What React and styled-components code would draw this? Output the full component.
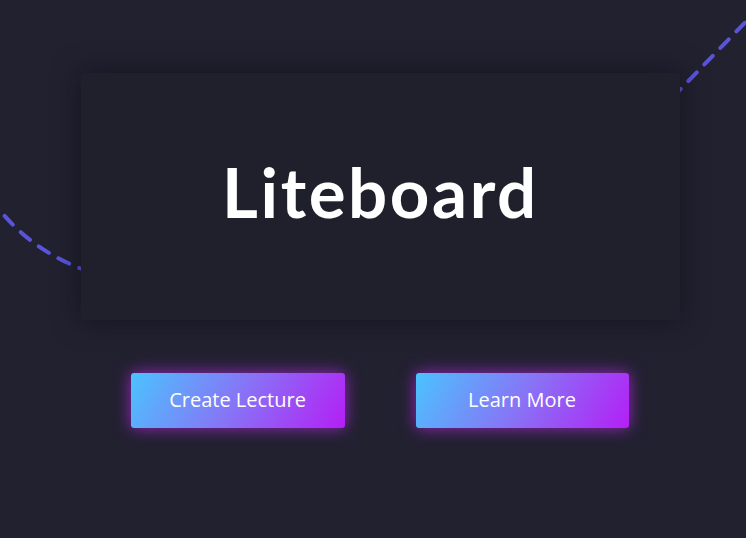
import React from 'react'
import styled, { createGlobalStyle } from 'styled-components'

const GlobalStyle = createGlobalStyle`
  html, body {
    margin: 0;
    padding: 0;
    background: #222130;
    overflow: hidden;
  }
  body {
    font-family: "Open Sans", "Liberation Sans", sans-serif;
  }
`

const Page = styled.div`
  position: relative;
  width: 746px;
  height: 538px;
  background: #222130;
  overflow: hidden;
`

const Curve = styled.svg`
  position: absolute;
  left: 0;
  top: 0;
  width: 746px;
  height: 538px;
  pointer-events: none;
`

const Content = styled.div`
  position: relative;
  display: flex;
  flex-direction: column;
  align-items: center;
  width: 599px;
  padding: 73px 0 0 81px;
  gap: 53px;
`

const Card = styled.div`
  width: 100%;
  height: 247px;
  background: #20202c;
  border-radius: 3px;
  box-shadow: 0 0 28px rgba(10, 10, 18, 0.55);
  display: flex;
  align-items: center;
  justify-content: center;
  padding-bottom: 10px;
  box-sizing: border-box;
`

const Title = styled.h1`
  margin: 0;
  font-family: Lato, "Open Sans", sans-serif;
  font-weight: 700;
  font-size: 69px;
  color: #ffffff;
  letter-spacing: 2.6px;
`

const Buttons = styled.div`
  display: flex;
  gap: 71px;
  margin-right: 2px;
`

const Button = styled.button`
  width: ${p => p.$w}px;
  height: 55px;
  border: none;
  border-radius: 3px;
  background: linear-gradient(120deg, #4bc3fe 0%, #8873f6 50%, #b41ff5 100%);
  box-shadow: 0 0 16px rgba(190, 40, 245, 0.75);
  color: #ffffff;
  font-family: "Open Sans", "Liberation Sans", sans-serif;
  font-size: 20px;
  padding: 0 0 2px;
  cursor: pointer;
`

export default function App() {
  return (
    <Page>
      <GlobalStyle />
      <Curve viewBox="0 0 746 538">
        <path
          d="M -10 198 C 20 238, 50 258, 95 274 L 670 100 L 762 5"
          fill="none"
          stroke="#5a54db"
          strokeWidth="4"
          strokeLinecap="round"
          strokeDasharray="12 11"
        />
      </Curve>
      <Content>
        <Card>
          <Title>Liteboard</Title>
        </Card>
        <Buttons>
          <Button $w={214}>Create Lecture</Button>
          <Button $w={213}>Learn More</Button>
        </Buttons>
      </Content>
    </Page>
  )
}
